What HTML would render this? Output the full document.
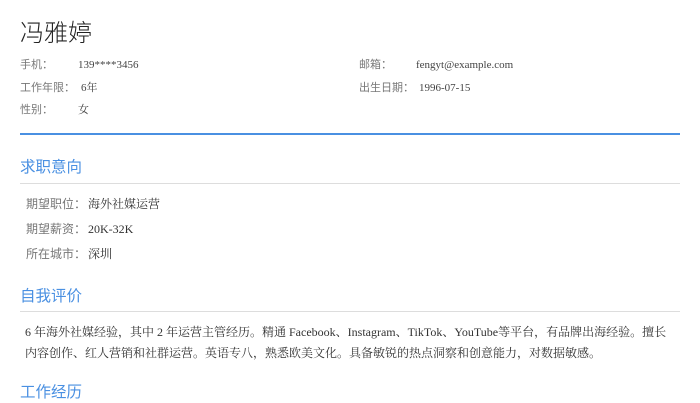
<!DOCTYPE html>
<html><head><meta charset="utf-8"><style>
body{margin:0;background:#fff;width:700px;height:400px;overflow:hidden;font-family:"Liberation Serif","Noto Serif CJK SC",serif;color:#333}
.a{position:absolute;white-space:nowrap;line-height:16px}
.l{color:#777;font-size:11px;font-family:"Liberation Sans","Noto Sans CJK SC",sans-serif}
.v{font-size:11px;color:#444}
.h{color:#4a90e2;font-size:15.5px;font-family:"Liberation Sans","Noto Sans CJK SC",sans-serif;line-height:20px}
.hr{position:absolute;left:20px;width:660px;height:1px;background:#ddd}
.k{color:#777;font-size:12px;font-family:"Liberation Sans","Noto Sans CJK SC",sans-serif}
.m{font-size:12px;color:#333}
</style></head><body>
<div class="a" style="left:20px;top:16px;font-size:24px;line-height:30px;color:#222;font-weight:300;font-family:'Noto Sans CJK SC',sans-serif">冯雅婷</div>
<div class="a l" style="left:20px;top:57px">手机：</div><div class="a v" style="left:78px;top:57px">139****3456</div>
<div class="a l" style="left:359px;top:57px">邮箱：</div><div class="a v" style="left:416px;top:57px">fengyt@example.com</div>
<div class="a l" style="left:20px;top:80px">工作年限：</div><div class="a v" style="left:81px;top:80px">6年</div>
<div class="a l" style="left:359px;top:80px">出生日期：</div><div class="a v" style="left:419px;top:80px">1996-07-15</div>
<div class="a l" style="left:20px;top:102px">性别：</div><div class="a v" style="left:78px;top:102px">女</div>
<div style="position:absolute;left:20px;top:133px;width:660px;height:2px;background:#4a90e2"></div>
<div class="a h" style="left:20px;top:158px">求职意向</div>
<div class="hr" style="top:183px"></div>
<div class="a k" style="left:26px;top:196px">期望职位：</div><div class="a m" style="left:88px;top:196px">海外社媒运营</div>
<div class="a k" style="left:26px;top:221px">期望薪资：</div><div class="a m" style="left:88px;top:221px">20K-32K</div>
<div class="a k" style="left:26px;top:246px">所在城市：</div><div class="a m" style="left:88px;top:246px">深圳</div>
<div class="a h" style="left:20px;top:287px">自我评价</div>
<div class="hr" style="top:311px"></div>
<div class="a m" style="left:25px;top:322px;line-height:21px;white-space:normal;width:650px">6 年海外社媒经验，其中 2 年运营主管经历。精通 Facebook、Instagram、TikTok、YouTube等平台，有品牌出海经验。擅长<br>内容创作、红人营销和社群运营。英语专八，熟悉欧美文化。具备敏锐的热点洞察和创意能力，对数据敏感。</div>
<div class="a h" style="left:20px;top:383px">工作经历</div>
</body></html>
